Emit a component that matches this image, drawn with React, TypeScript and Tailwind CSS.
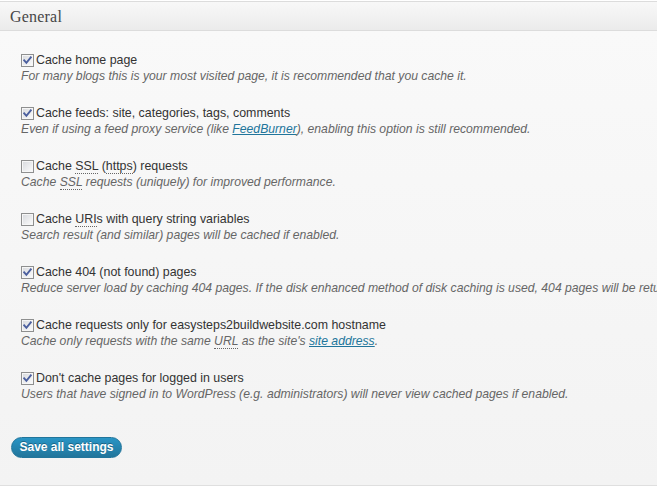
import React from "react";

const font = { fontFamily: '"Liberation Sans", Arial, sans-serif' };

function Box({ checked }: { checked: boolean }) {
  return (
    <svg width="13" height="13" viewBox="0 0 13 13" className="shrink-0 block">
      <defs>
        <linearGradient id={checked ? "gc" : "gu"} x1="0" y1="0" x2="1" y2="1">
          <stop offset="0" stopColor="#d8dade" />
          <stop offset="1" stopColor="#fbfbfb" />
        </linearGradient>
      </defs>
      <rect x="0.5" y="0.5" width="12" height="12" fill="#f4f4f4" stroke="#8e8f8f" />
      <rect x="1.5" y="1.5" width="10" height="10" fill={`url(#${checked ? "gc" : "gu"})`} stroke="#f6f6f6" />
      {checked && (
        <path d="M3.2 6.3 L5.4 8.8 L9.8 3.4" fill="none" stroke="#4b5f9e" strokeWidth="1.9" strokeLinecap="square" />
      )}
    </svg>
  );
}

function Abbr({ children }: { children: React.ReactNode }) {
  return <span className="border-b border-dotted border-[#666]">{children}</span>;
}

function Row({ checked, label, desc }: { checked: boolean; label: React.ReactNode; desc: React.ReactNode }) {
  return (
    <div className="mb-[21px]">
      <div className="flex items-center h-4 leading-4">
        <span className="mt-[1px]">
          <Box checked={checked} />
        </span>
        <span className="ml-[2px] text-[12.4px] text-[#333] whitespace-nowrap">{label}</span>
      </div>
      <div className="h-4 leading-4 italic text-[12.2px] text-[#666] whitespace-nowrap">{desc}</div>
    </div>
  );
}

export default function App() {
  return (
    <div className="w-[657px] h-[489px] bg-white overflow-hidden text-[12px]" style={font}>
      <div className="border-t border-[#dcdcdc] mt-px">
        <div className="h-[29px] border-b border-[#dcdcdc] bg-gradient-to-b from-[#f8f8f8] to-[#ebebeb] flex items-center pl-[10px] pt-[2px]">
          <span
            className="text-[16px] text-[#464646] tracking-[0.2px]"
            style={{ fontFamily: '"Liberation Serif", "Times New Roman", serif' }}
          >
            General
          </span>
        </div>
        <div className="h-[455px] border-b border-[#dfdfdf] bg-gradient-to-b from-[#f9f9f9] to-[#f3f3f3] pt-[21px] pl-[21px]">
          <Row
            checked
            label="Cache home page"
            desc="For many blogs this is your most visited page, it is recommended that you cache it."
          />
          <Row
            checked
            label="Cache feeds: site, categories, tags, comments"
            desc={
              <>
                Even if using a feed proxy service (like{" "}
                <span className="text-[#21759b] underline">FeedBurner</span>), enabling this option is still
                recommended.
              </>
            }
          />
          <Row
            checked={false}
            label={
              <>
                Cache <Abbr>SSL</Abbr> (<Abbr>https</Abbr>) requests
              </>
            }
            desc={
              <>
                Cache <Abbr>SSL</Abbr> requests (uniquely) for improved performance.
              </>
            }
          />
          <Row
            checked={false}
            label={
              <>
                Cache <Abbr>URI</Abbr>s with query string variables
              </>
            }
            desc="Search result (and similar) pages will be cached if enabled."
          />
          <Row
            checked
            label="Cache 404 (not found) pages"
            desc="Reduce server load by caching 404 pages. If the disk enhanced method of disk caching is used, 404 pages will be returned with a 200 response code. Use at your own risk."
          />
          <Row
            checked
            label="Cache requests only for easysteps2buildwebsite.com hostname"
            desc={
              <>
                Cache only requests with the same <Abbr>URL</Abbr> as the site's{" "}
                <span className="text-[#21759b] underline">site address</span>.
              </>
            }
          />
          <Row
            checked
            label="Don't cache pages for logged in users"
            desc="Users that have signed in to WordPress (e.g. administrators) will never view cached pages if enabled."
          />
          <div className="-ml-[10px] mt-[35px]">
            <button
              className="h-[21px] w-[111px] rounded-full border border-[#21759b] bg-gradient-to-b from-[#2a95c5] to-[#21759b] text-white font-bold text-[12px] leading-[19px] [text-shadow:0_-1px_0_rgba(0,0,0,0.3)]"
              style={font}
            >
              Save all settings
            </button>
          </div>
        </div>
      </div>
    </div>
  );
}
